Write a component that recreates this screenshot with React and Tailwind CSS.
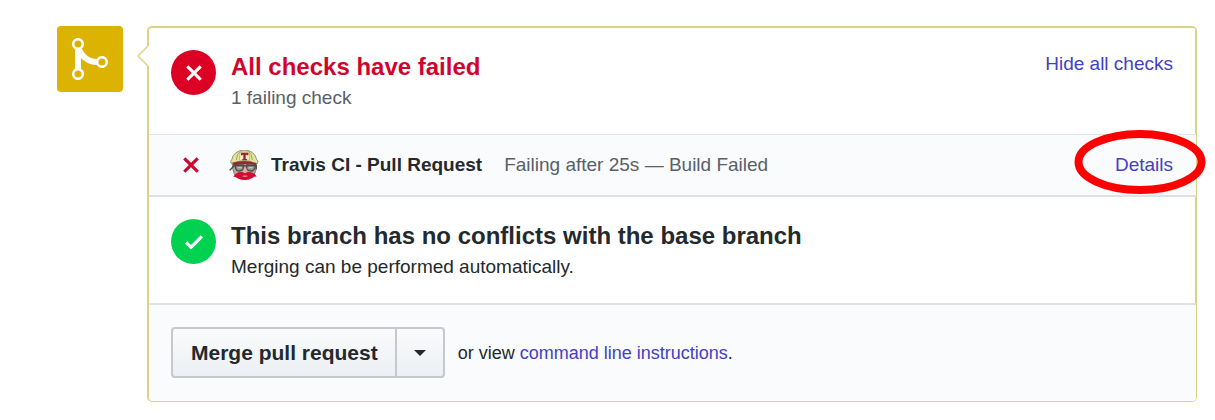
import React from "react";

const X_PATH =
  "M7.48 8l3.75 3.75-1.48 1.48L6 9.48l-3.75 3.75-1.48-1.48L4.52 8 .77 4.25l1.48-1.48L6 6.52l3.75-3.75 1.48 1.48L7.48 8z";
const CHECK_PATH = "M12 5l-8 8-4-4 1.5-1.5L4 10l6.5-6.5L12 5z";
const MERGE_PATH =
  "M10 7c-.73 0-1.38.41-1.73 1.02V8C7.22 7.98 6 7.64 5.14 6.98c-.75-.58-1.5-1.61-1.89-2.44A1.993 1.993 0 0 0 2 .99C.89.99 0 1.89 0 3a2 2 0 0 0 1 1.72v6.56c-.59.35-1 .99-1 1.72 0 1.11.89 2 2 2a1.993 1.993 0 0 0 1-3.72V7.67c.67.7 1.44 1.27 2.3 1.69.86.42 2.03.63 2.97.64v-.02c.36.61 1 1.02 1.73 1.02 1.11 0 2-.89 2-2 0-1.11-.89-2-2-2zm-6.8 6c0 .66-.55 1.2-1.2 1.2-.65 0-1.2-.55-1.2-1.2 0-.65.55-1.2 1.2-1.2.65 0 1.2.55 1.2 1.2zm0-10c0 .66-.55 1.2-1.2 1.2C1.34 4.2.8 3.65.8 3c0-.65.55-1.2 1.2-1.2.65 0 1.2.55 1.2 1.2zm8 6c0 .66-.55 1.2-1.2 1.2-.65 0-1.2-.55-1.2-1.2 0-.65.55-1.2 1.2-1.2.65 0 1.2.55 1.2 1.2z";

function Octicon({ d, className }) {
  return (
    <svg viewBox="0 0 12 16" className={className} fill="currentColor" aria-hidden="true">
      <path d={d} />
    </svg>
  );
}

function StatusCircle({ d, className }) {
  return (
    <span className={`flex size-[45px] shrink-0 items-center justify-center rounded-full text-white ${className}`}>
      <Octicon d={d} className="h-6 w-[18px]" />
    </span>
  );
}

function TravisAvatar() {
  return (
    <svg viewBox="0 0 90 90" className="size-[30px] shrink-0" aria-hidden="true">
      <circle cx="45" cy="45" r="45" fill="#fff" />
      <path d="M10 40Q10 66 20 78Q32 89 47 89Q64 88 74 78Q83 64 82 40Z" fill="#bfa795" stroke="#5c5650" strokeWidth="2" />
      <path d="M12 37Q46 26 82 37L81 46Q46 37 13 48Z" fill="#9e2233" />
      <path d="M6 40Q3 32 8 29Q14 2 46 0Q77 2 83 28Q90 33 85 41Q66 33 46 33Q26 33 6 40Z" fill="#e4e498" stroke="#64674a" strokeWidth="2" />
      <path d="M22 30Q23 12 34 4M70 30Q69 12 58 4" fill="none" stroke="#97996a" strokeWidth="2.5" />
      <path d="M33 6H60L62 31H31Z" fill="#efeebc" stroke="#97996a" strokeWidth="1.5" />
      <path d="M36 8H58V16H53V14H50V27H54V31H40V27H43V14H41V16H36Z" fill="#a51d35" />
      <path d="M2 61L16 47L43 45L48 48L54 45L82 46V58" fill="none" stroke="#4a4c4a" strokeWidth="4" />
      <path d="M19 47L43 46L43 58Q36 65 25 62Q19 59 19 47ZM53 46L79 47Q78 60 69 63Q56 63 53 57Z" fill="#93948b" stroke="#4a4c4a" strokeWidth="4" />
      <path d="M26 53H38M59 53H71" stroke="#c9c6b7" strokeWidth="4" />
      <path d="M45 54L40 68H56L52 55Z" fill="#d8b59d" />
      <path d="M13 80Q22 64 40 66L48 70L56 66Q74 64 83 80Q76 79 70 84Q48 96 24 84Q20 80 13 80Z" fill="#d40b35" />
      <path d="M38 78Q47 75 58 78Q48 82 38 78Z" fill="#e9a9a6" />
    </svg>
  );
}

const link = "text-[#4440c4] hover:underline";

export default function App() {
  return (
    <main className="flex items-start gap-6 pt-[26px] pr-[18px] pb-4 pl-[57px] font-['Liberation_Sans',Arial,sans-serif] text-[19px] leading-7 text-[#24292e]">
      <div className="flex size-[66px] shrink-0 items-center justify-center rounded bg-[#dbb300] text-white">
        <Octicon d={MERGE_PATH} className="h-12 w-9" />
      </div>

      <div className="relative min-w-0 flex-1 rounded-[5px] border-t-2 border-r border-b border-l-2 border-[#d9d387]">
        <svg viewBox="0 0 12 22" className="absolute top-[17px] -left-[12px] h-[22px] w-3" aria-hidden="true">
          <path d="M12 1H11L1 11L11 21H12Z" fill="#fff" />
          <path d="M11 1L1 11L11 21" fill="none" stroke="#d9d387" strokeWidth="1.5" />
        </svg>

        <section className="flex items-start gap-[15px] border-r border-[#d9d387] px-[22px] py-[22px]">
          <StatusCircle d={X_PATH} className="bg-[#dc0024]" />
          <div className="min-w-0 flex-1">
            <h2 className="text-2xl leading-[34px] font-bold text-[#d2042d]">All checks have failed</h2>
            <p className="text-[#586069]">1 failing check</p>
          </div>
          <button type="button" className={`shrink-0 cursor-pointer ${link}`}>
            Hide all checks
          </button>
        </section>

        <section className="flex items-center border-t border-b-2 border-t-[#e1e4e8] border-b-[#dfe2e5] bg-[#fafbfc] py-[15px] pr-[23px] pl-[33px]">
          <Octicon d={X_PATH} className="h-6 w-[18px] shrink-0 text-[#d2042d]" />
          <div className="ml-[29px] flex min-w-0 flex-1 items-center">
            <TravisAvatar />
            <strong className="ml-3 font-bold">Travis CI - Pull Request</strong>
            <span className="ml-[22px] text-[#586069]">Failing after 25s — Build Failed</span>
          </div>
          <span className="relative shrink-0">
            <a href="#details" className={link}>Details</a>
            <svg
              viewBox="0 0 132 64"
              className="pointer-events-none absolute -top-[21px] -right-[33px] h-16 w-[132px] max-w-none"
              aria-hidden="true"
            >
              <ellipse cx="66" cy="32" rx="61.5" ry="28" fill="none" stroke="#ff0000" strokeWidth="8" />
            </svg>
          </span>
        </section>

        <section className="flex items-start gap-[15px] border-r border-[#d9d387] px-[22px] py-[22px]">
          <StatusCircle d={CHECK_PATH} className="bg-[#00d150]" />
          <div className="min-w-0 flex-1">
            <h2 className="text-2xl leading-[34px] font-bold">This branch has no conflicts with the base branch</h2>
            <p>Merging can be performed automatically.</p>
          </div>
        </section>

        <footer className="flex items-center gap-[13px] rounded-b-[4px] border-t-2 border-[#dfe2e5] bg-[#fafbfc] px-[22px] pt-[22px] pb-[23px]">
          <div className="flex rounded border-2 border-[#c5c8cc] bg-linear-to-b from-[#fafbfc] to-[#eceff3]">
            <button type="button" className="cursor-pointer py-[9px] pr-[17px] pl-[18px] text-[21px] leading-[29px] font-bold">
              Merge pull request
            </button>
            <button
              type="button"
              aria-label="Select merge method"
              className="flex cursor-pointer items-center justify-center border-l-2 border-[#c5c8cc] px-[17px]"
            >
              <svg viewBox="0 0 12 6" className="h-1.5 w-3" fill="currentColor" aria-hidden="true">
                <path d="M0 0H12L6 6Z" />
              </svg>
            </button>
          </div>
          <p className="text-lg leading-7">
            or view <a href="#command-line" className={link}>command line instructions</a>.
          </p>
        </footer>
      </div>
    </main>
  );
}
